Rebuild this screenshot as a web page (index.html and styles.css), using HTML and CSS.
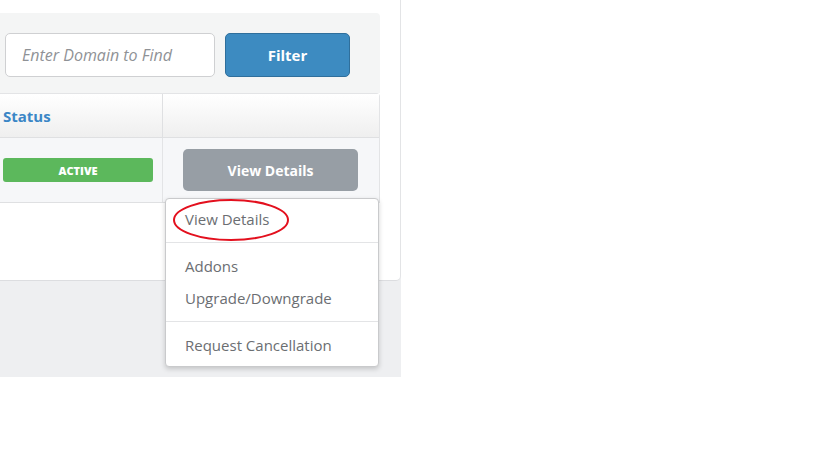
FILE: index.html
```html
<!DOCTYPE html>
<html>
<head>
<meta charset="utf-8">
<link rel="stylesheet" href="styles.css">
</head>
<body>
<div class="page">
  <div class="card">
    <div class="filter-bar">
      <input class="domain-input" type="text" placeholder="Enter Domain to Find">
      <button class="btn-filter">Filter</button>
    </div>
    <div class="table">
      <div class="thead">
        <div class="th th-status">Status</div>
        <div class="th th-actions"></div>
      </div>
      <div class="trow">
        <div class="td td-status"><span class="badge-active">ACTIVE</span></div>
        <div class="td td-actions"><button class="btn-details">View Details</button></div>
      </div>
    </div>
  </div>
  <div class="behind-btn"></div>
  <ul class="dropdown">
    <li class="item item-first"><span class="circled">View Details</span>
      <svg class="ring" width="118" height="44" viewBox="0 0 118 44"><ellipse cx="59" cy="22" rx="57" ry="20" fill="none" stroke="#e3101e" stroke-width="2"/></svg>
    </li>
    <li class="divider"></li>
    <li class="item">Addons</li>
    <li class="item">Upgrade/Downgrade</li>
    <li class="divider"></li>
    <li class="item">Request Cancellation</li>
  </ul>
</div>
</body>
</html>
```

FILE: styles.css
```css
html, body {
  margin: 0;
  padding: 0;
  background: #ffffff;
  font-family: "Open Sans", "Liberation Sans", sans-serif;
}

.page {
  position: relative;
  width: 401px;
  height: 377px;
  background: #eeeff1;
}

.card {
  box-sizing: border-box;
  width: 401px;
  height: 281px;
  background: #ffffff;
  border-right: 1px solid #e3e4e6;
  border-bottom: 1px solid #dcdde0;
  border-bottom-right-radius: 5px;
  padding-top: 13px;
}

.filter-bar {
  box-sizing: border-box;
  width: 380px;
  height: 80px;
  background: #f4f5f5;
  border-top-right-radius: 4px;
  padding: 20px 0 0 5px;
  display: flex;
  gap: 10px;
}

.domain-input {
  box-sizing: border-box;
  width: 210px;
  height: 44px;
  border: 1px solid #cfd0d2;
  border-radius: 5px;
  padding: 0 16px;
  font-family: inherit;
  font-size: 16px;
  background: #fff;
  outline: none;
}
.domain-input::placeholder {
  color: #8f9296;
  font-style: italic;
}

.btn-filter {
  box-sizing: border-box;
  width: 125px;
  height: 44px;
  background: #3d8bc1;
  border: 1px solid #2f6f9c;
  border-radius: 5px;
  color: #ffffff;
  font-family: inherit;
  font-weight: 700;
  font-size: 15px;
  padding: 0;
}

.table {
  box-sizing: border-box;
  width: 380px;
  border-top: 1px solid #e3e4e6;
  border-right: 1px solid #e3e4e6;
  border-top-right-radius: 4px;
}

.thead {
  display: flex;
  height: 43px;
  background: linear-gradient(#ffffff, #efefef);
  border-bottom: 1px solid #dfe0e2;
}
.th {
  display: flex;
  align-items: center;
  font-weight: 700;
  font-size: 15px;
  color: #3b86c6;
}
.th-status {
  width: 163px;
  box-sizing: border-box;
  padding-left: 3px;
  border-right: 1px solid #dfe0e2;
}
.th-actions { flex: 1; }

.trow {
  display: flex;
  height: 64px;
  background: #f6f7f9;
  border-bottom: 1px solid #dfe0e2;
}
.td {
  display: flex;
  align-items: center;
}
.td-status {
  width: 163px;
  box-sizing: border-box;
  padding-left: 3px;
  border-right: 1px solid #e3e4e6;
}
.badge-active {
  display: flex;
  align-items: center;
  justify-content: center;
  width: 150px;
  height: 24px;
  background: #5cb85c;
  border-radius: 3px;
  color: #ffffff;
  font-weight: 800;
  font-size: 11px;
}
.td-actions {
  flex: 1;
  padding-left: 20px;
  align-items: flex-start;
  padding-top: 11px;
}
.btn-details {
  width: 175px;
  height: 42px;
  background: #979ea5;
  border: none;
  border-radius: 5px;
  color: #ffffff;
  font-family: inherit;
  font-weight: 700;
  font-size: 14px;
  padding: 0;
}

.behind-btn {
  position: absolute;
  left: 300px;
  top: 225px;
  box-sizing: border-box;
  width: 79px;
  height: 30px;
  border: 1px solid #d2d3d5;
  border-radius: 4px;
  background: #fff;
}

.dropdown {
  position: absolute;
  left: 165px;
  top: 198px;
  box-sizing: border-box;
  width: 214px;
  height: 169px;
  margin: 0;
  padding: 4px 0 6px;
  list-style: none;
  background: #ffffff;
  border: 1px solid #c9cacc;
  border-radius: 4px;
  box-shadow: 0 2px 5px rgba(0, 0, 0, 0.18);
}
.item {
  position: relative;
  height: 32px;
  line-height: 32px;
  padding-left: 19px;
  font-size: 15px;
  color: #6b6e72;
}
.divider {
  height: 1px;
  background: #e3e4e6;
  margin: 7px 0;
}
.ring {
  position: absolute;
  left: 6px;
  top: -5px;
}
```
